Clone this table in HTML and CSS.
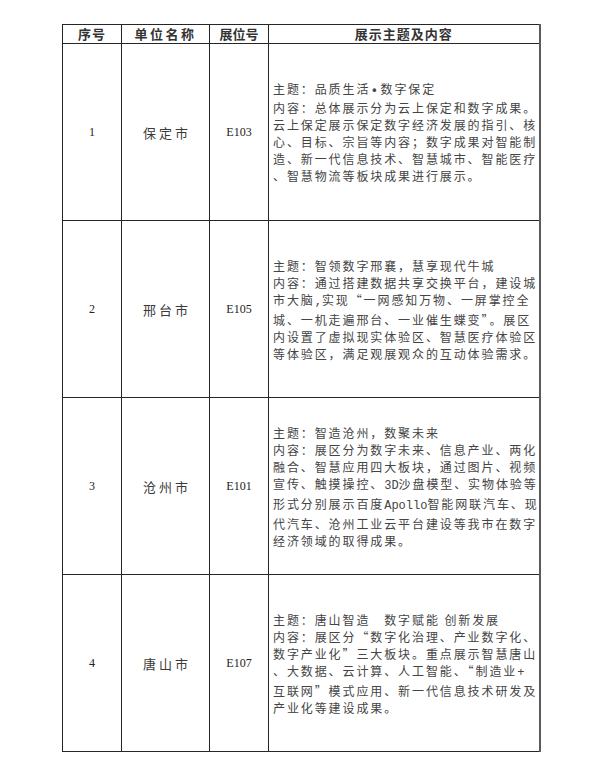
FILE: index.html
```html
<!DOCTYPE html>
<html lang="zh-CN">
<head>
<meta charset="utf-8">
<title>展示主题及内容</title>
<link rel="stylesheet" href="styles.css">
</head>
<body>
<table class="exhibits">
  <colgroup>
    <col class="c-no"><col class="c-unit"><col class="c-booth"><col class="c-desc">
  </colgroup>
  <thead>
    <tr class="head">
      <th class="h-no">序号</th>
      <th class="h-unit">单位名称</th>
      <th class="h-booth">展位号</th>
      <th class="h-desc">展示主题及内容</th>
    </tr>
  </thead>
  <tbody>
    <tr class="row">
      <td class="num">1</td>
      <td class="city">保定市</td>
      <td class="booth">E103</td>
      <td class="desc">主题：品质生活<span class="dot">•</span>数字保定<br>内容：总体展示分为云上保定和数字成果。<br>云上保定展示保定数字经济发展的指引、核<br>心、目标、宗旨等内容；数字成果对智能制<br>造、新一代信息技术、智慧城市、智能医疗<br>、智慧物流等板块成果进行展示。</td>
    </tr>
    <tr class="row">
      <td class="num">2</td>
      <td class="city">邢台市</td>
      <td class="booth">E105</td>
      <td class="desc">主题：智领数字邢襄，慧享现代牛城<br>内容：通过搭建数据共享交换平台，建设城<br>市大脑<span class="lat">,</span>实现“一网感知万物、一屏掌控全<br>城、一机走遍邢台、一业催生蝶变”。展区<br>内设置了虚拟现实体验区、智慧医疗体验区<br>等体验区，满足观展观众的互动体验需求。</td>
    </tr>
    <tr class="row">
      <td class="num">3</td>
      <td class="city">沧州市</td>
      <td class="booth">E101</td>
      <td class="desc">主题：智造沧州，数聚未来<br>内容：展区分为数字未来、信息产业、两化<br>融合、智慧应用四大板块，通过图片、视频<br>宣传、触摸操控、<span class="lat">3D</span>沙盘模型、实物体验等<br>形式分别展示百度<span class="lat">Apollo</span>智能网联汽车、现<br>代汽车、沧州工业云平台建设等我市在数字<br>经济领域的取得成果。</td>
    </tr>
    <tr class="row">
      <td class="num">4</td>
      <td class="city">唐山市</td>
      <td class="booth">E107</td>
      <td class="desc">主题：唐山智造　数字赋能 创新发展<br>内容：展区分“数字化治理、产业数字化、<br>数字产业化”三大板块。重点展示智慧唐山<br>、大数据、云计算、人工智能、“制造业<span class="lat">+</span><br>互联网”模式应用、新一代信息技术研发及<br>产业化等建设成果。</td>
    </tr>
  </tbody>
</table>
</body>
</html>
```
FILE: styles.css
```css
html, body {
  margin: 0;
  padding: 0;
  background: #ffffff;
}

body {
  font-family: "Noto Sans CJK SC", "Liberation Serif", sans-serif;
  color: #333333;
}

.exhibits {
  border-collapse: collapse;
  table-layout: fixed;
  width: 477px;
  margin: 24px 0 0 62px;
  border-right: 2px solid #5a5a5a;
}

.c-no { width: 59px; }
.c-unit { width: 88px; }
.c-booth { width: 59px; }
.c-desc { width: 271px; }

.exhibits th,
.exhibits td {
  border: 1px solid #262626;
  padding: 0;
  vertical-align: middle;
  text-align: center;
}

.exhibits th:last-child,
.exhibits td:last-child {
  border-right: 2px solid #5a5a5a;
}

.exhibits .head {
  height: 19px;
}

.exhibits .head th {
  font-size: 13px;
  line-height: 16px;
  font-weight: 700;
  color: #333333;
}

.exhibits .h-no { letter-spacing: 1px; }
.exhibits .h-unit { letter-spacing: 2.5px; }
.exhibits .h-booth { letter-spacing: 0; }
.exhibits .h-desc { letter-spacing: 1px; }

.exhibits .row {
  height: 177px;
}

.exhibits .num,
.exhibits .booth {
  font-family: "Liberation Serif", serif;
  font-size: 12px;
  font-weight: 400;
  color: #222222;
}

.exhibits .city {
  font-size: 13px;
  letter-spacing: 3px;
  padding-left: 3px;
  color: #3a3a3a;
}

.exhibits .desc {
  text-align: left;
  padding-left: 4px;
  font-size: 12px;
  line-height: 17px;
  letter-spacing: 1.9px;
  white-space: nowrap;
  overflow: visible;
  color: #444444;
}

.dot {
  font-family: "Liberation Sans", sans-serif;
  font-weight: 700;
  letter-spacing: 0;
  padding: 0 4px 0 2px;
}

.lat {
  font-family: "Liberation Mono", monospace;
  letter-spacing: 0;
}
```
